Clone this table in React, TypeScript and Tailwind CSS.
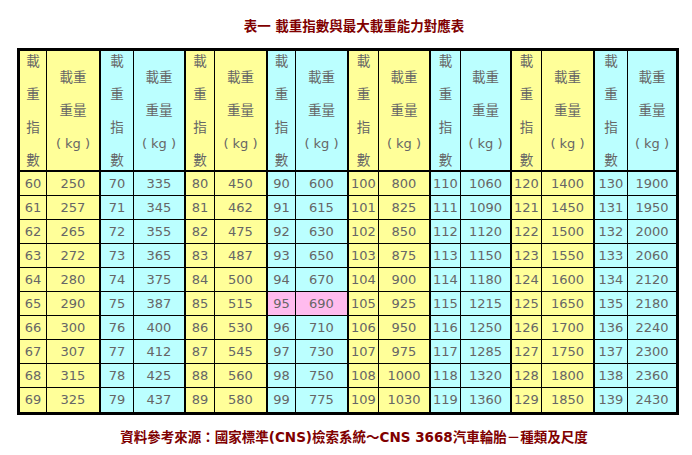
const weights = [
  [250, 257, 265, 272, 280, 290, 300, 307, 315, 325],
  [335, 345, 355, 365, 375, 387, 400, 412, 425, 437],
  [450, 462, 475, 487, 500, 515, 530, 545, 560, 580],
  [600, 615, 630, 650, 670, 690, 710, 730, 750, 775],
  [800, 825, 850, 875, 900, 925, 950, 975, 1000, 1030],
  [1060, 1090, 1120, 1150, 1180, 1215, 1250, 1285, 1320, 1360],
  [1400, 1450, 1500, 1550, 1600, 1650, 1700, 1750, 1800, 1850],
  [1900, 1950, 2000, 2060, 2120, 2180, 2240, 2300, 2360, 2430],
];

const cjk = "font-['DejaVu_Sans','Noto_Sans_CJK_TC',sans-serif]";

function cellBg(group: number, row: number) {
  // 95 / 690 is highlighted
  if (group === 3 && row === 5) return 'bg-[#ffbbee]';
  return group % 2 === 0 ? 'bg-[#ffff99]' : 'bg-[#bbffff]';
}

export default function App() {
  const cells: React.ReactNode[] = [];

  // header row
  for (let g = 0; g < 8; g++) {
    const bg = g % 2 === 0 ? 'bg-[#ffff99]' : 'bg-[#bbffff]';
    cells.push(
      <div key={`hi${g}`} className={`${bg} border-r border-b-2 border-black flex flex-col items-center justify-center text-[13.5px] leading-[33px] overflow-visible`}>
        <span>載</span>
        <span>重</span>
        <span>指</span>
        <span>數</span>
      </div>
    );
    cells.push(
      <div key={`hw${g}`} className={`${bg} ${g < 7 ? 'border-r-2' : ''} border-b-2 border-black flex flex-col items-center justify-center text-[13.5px] leading-[33px]`}>
        <span>載重</span>
        <span>重量</span>
        <span className="text-[13px]">( kg )</span>
      </div>
    );
  }

  // data rows
  for (let r = 0; r < 10; r++) {
    const rowBorder = r < 9 ? 'border-b' : '';
    for (let g = 0; g < 8; g++) {
      const bg = cellBg(g, r);
      cells.push(
        <div key={`i${r}-${g}`} className={`${bg} border-r ${rowBorder} border-black flex items-center justify-center`}>
          {60 + g * 10 + r}
        </div>
      );
      cells.push(
        <div key={`w${r}-${g}`} className={`${bg} ${g < 7 ? 'border-r-2' : ''} ${rowBorder} border-black flex items-center justify-center`}>
          {weights[g][r]}
        </div>
      );
    }
  }

  return (
    <div className={`w-[692px] h-[455px] bg-white ${cjk} overflow-hidden`}>
      <div className="flex justify-center pt-[17px] pl-[16px] h-[48px]">
        <h1 className="text-[13.5px] leading-[18px] font-bold text-[#800000]">
          表一 載重指數與最大載重能力對應表
        </h1>
      </div>

      <div className="pl-[17px]">
        <div className="w-[662px] border-[3px] border-black grid grid-cols-[27px_54px_33px_52px_29px_53px_28px_53px_30px_52px_30px_51px_30px_53px_33px_48px] grid-rows-[121px_repeat(10,24px)] text-[13px] text-[#666666]">
          {cells}
        </div>
      </div>

      <div className="flex justify-center pl-[16px] pt-[13px]">
        <p className="text-[13.5px] leading-[18px] font-bold text-[#800000]">
          資料參考來源：國家標準(CNS)檢索系統～CNS 3668汽車輪胎－種類及尺度
        </p>
      </div>
    </div>
  );
}
